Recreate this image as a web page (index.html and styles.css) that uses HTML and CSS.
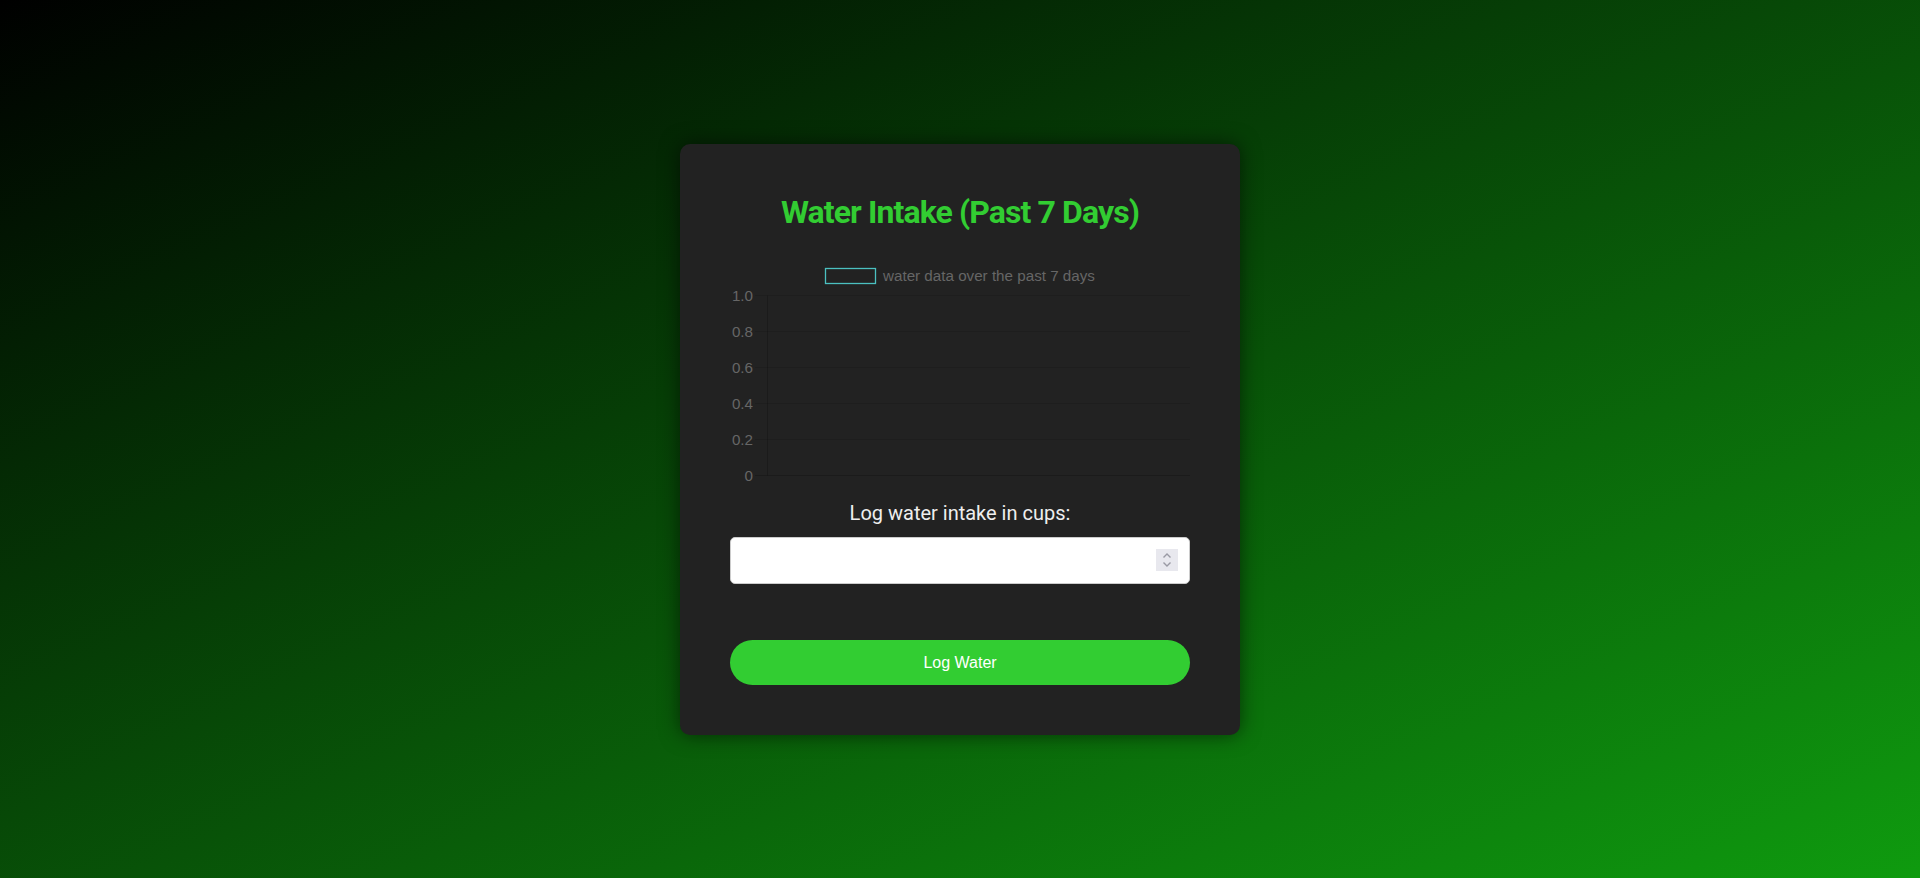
FILE: index.html
```html
<!DOCTYPE html>
<html lang="en">
<head>
<meta charset="utf-8">
<title>Water Intake</title>
<link rel="stylesheet" href="styles.css">
</head>
<body>
  <main class="card">
    <h1 class="title">Water Intake (Past 7 Days)</h1>
    <div class="chart">
      <svg class="chart-svg" width="462" height="240" viewBox="0 0 462 240">
        <rect class="legend-box" x="95.5" y="16.5" width="50" height="15"></rect>
        <text class="legend-text" x="153" y="28.8">water data over the past 7 days</text>
        <g class="grid">
          <line x1="25" y1="43.5" x2="460" y2="43.5"></line>
          <line x1="25" y1="79.5" x2="460" y2="79.5"></line>
          <line x1="25" y1="115.5" x2="460" y2="115.5"></line>
          <line x1="25" y1="151.5" x2="460" y2="151.5"></line>
          <line x1="25" y1="187.5" x2="460" y2="187.5"></line>
        </g>
        <line class="axis" x1="25" y1="223.5" x2="460" y2="223.5"></line>
        <line class="axis" x1="37.5" y1="43.5" x2="37.5" y2="223.5"></line>
        <g class="ticks">
          <text x="23" y="48.8">1.0</text>
          <text x="23" y="84.8">0.8</text>
          <text x="23" y="120.8">0.6</text>
          <text x="23" y="156.8">0.4</text>
          <text x="23" y="192.8">0.2</text>
          <text x="23" y="228.5">0</text>
        </g>
      </svg>
    </div>
    <label class="field-label" for="cups">Log water intake in cups:</label>
    <div class="input-wrap">
      <input class="cups-input" id="cups" type="text" inputmode="numeric">
      <span class="spinner" aria-hidden="true">
        <svg width="10" height="16" viewBox="0 0 10 16">
          <path d="M1.5 5.5 L5 2 L8.5 5.5" />
          <path d="M1.5 10.5 L5 14 L8.5 10.5" />
        </svg>
      </span>
    </div>
    <button class="log-btn" type="button">Log Water</button>
  </main>
</body>
</html>
```

FILE: styles.css
```css
html, body {
  margin: 0;
  padding: 0;
}

body {
  min-height: 100vh;
  display: flex;
  align-items: center;
  justify-content: center;
  background: linear-gradient(to bottom right, #000000, #0f9b0f);
  font-family: Roboto, "Liberation Sans", Arial, sans-serif;
}

.card {
  box-sizing: border-box;
  width: 560px;
  padding: 28px 50px 50px;
  background: #222222;
  border-radius: 10px;
  box-shadow: 0 0 20px rgba(0, 0, 0, 0.55);
  display: flex;
  flex-direction: column;
}

.title {
  margin: 21px 0 21px;
  font-size: 32px;
  font-weight: 700;
  letter-spacing: -0.9px;
  color: #32cd32;
  text-align: center;
  line-height: normal;
}

.chart {
  height: 240px;
}

.chart-svg {
  display: block;
  overflow: visible;
}

.legend-box {
  fill: none;
  stroke: #4bc0c0;
  stroke-width: 1.3;
}

.legend-text,
.ticks text {
  font-family: "Liberation Sans", Arial, sans-serif;
  font-size: 15.2px;
  fill: #666666;
}

.ticks text {
  text-anchor: end;
}

.grid line {
  stroke: rgba(0, 0, 0, 0.1);
  stroke-width: 1;
}

.axis {
  stroke: rgba(0, 0, 0, 0.18);
  stroke-width: 1;
}

.field-label {
  margin-top: 9px;
  font-size: 20px;
  color: #eeeeee;
  text-align: center;
  line-height: normal;
}

.input-wrap {
  position: relative;
  margin-top: 12px;
}

.cups-input {
  box-sizing: border-box;
  display: block;
  width: 100%;
  height: 47px;
  margin: 0;
  padding: 0 12px;
  border: 1px solid #cccccc;
  border-radius: 5px;
  background: #ffffff;
  font-size: 16px;
  outline: none;
}

.spinner {
  position: absolute;
  top: 12px;
  right: 12px;
  width: 22px;
  height: 22px;
  background: #e8e8ee;
  display: flex;
  align-items: center;
  justify-content: center;
}

.spinner path {
  fill: none;
  stroke: #9a9aa4;
  stroke-width: 1.4;
}

.log-btn {
  margin-top: 56px;
  height: 45px;
  padding: 2px 0 0;
  border: none;
  border-radius: 25px;
  background: #32cd32;
  color: #ffffff;
  font-family: "Liberation Sans", Arial, sans-serif;
  font-size: 16px;
  cursor: pointer;
}
```
